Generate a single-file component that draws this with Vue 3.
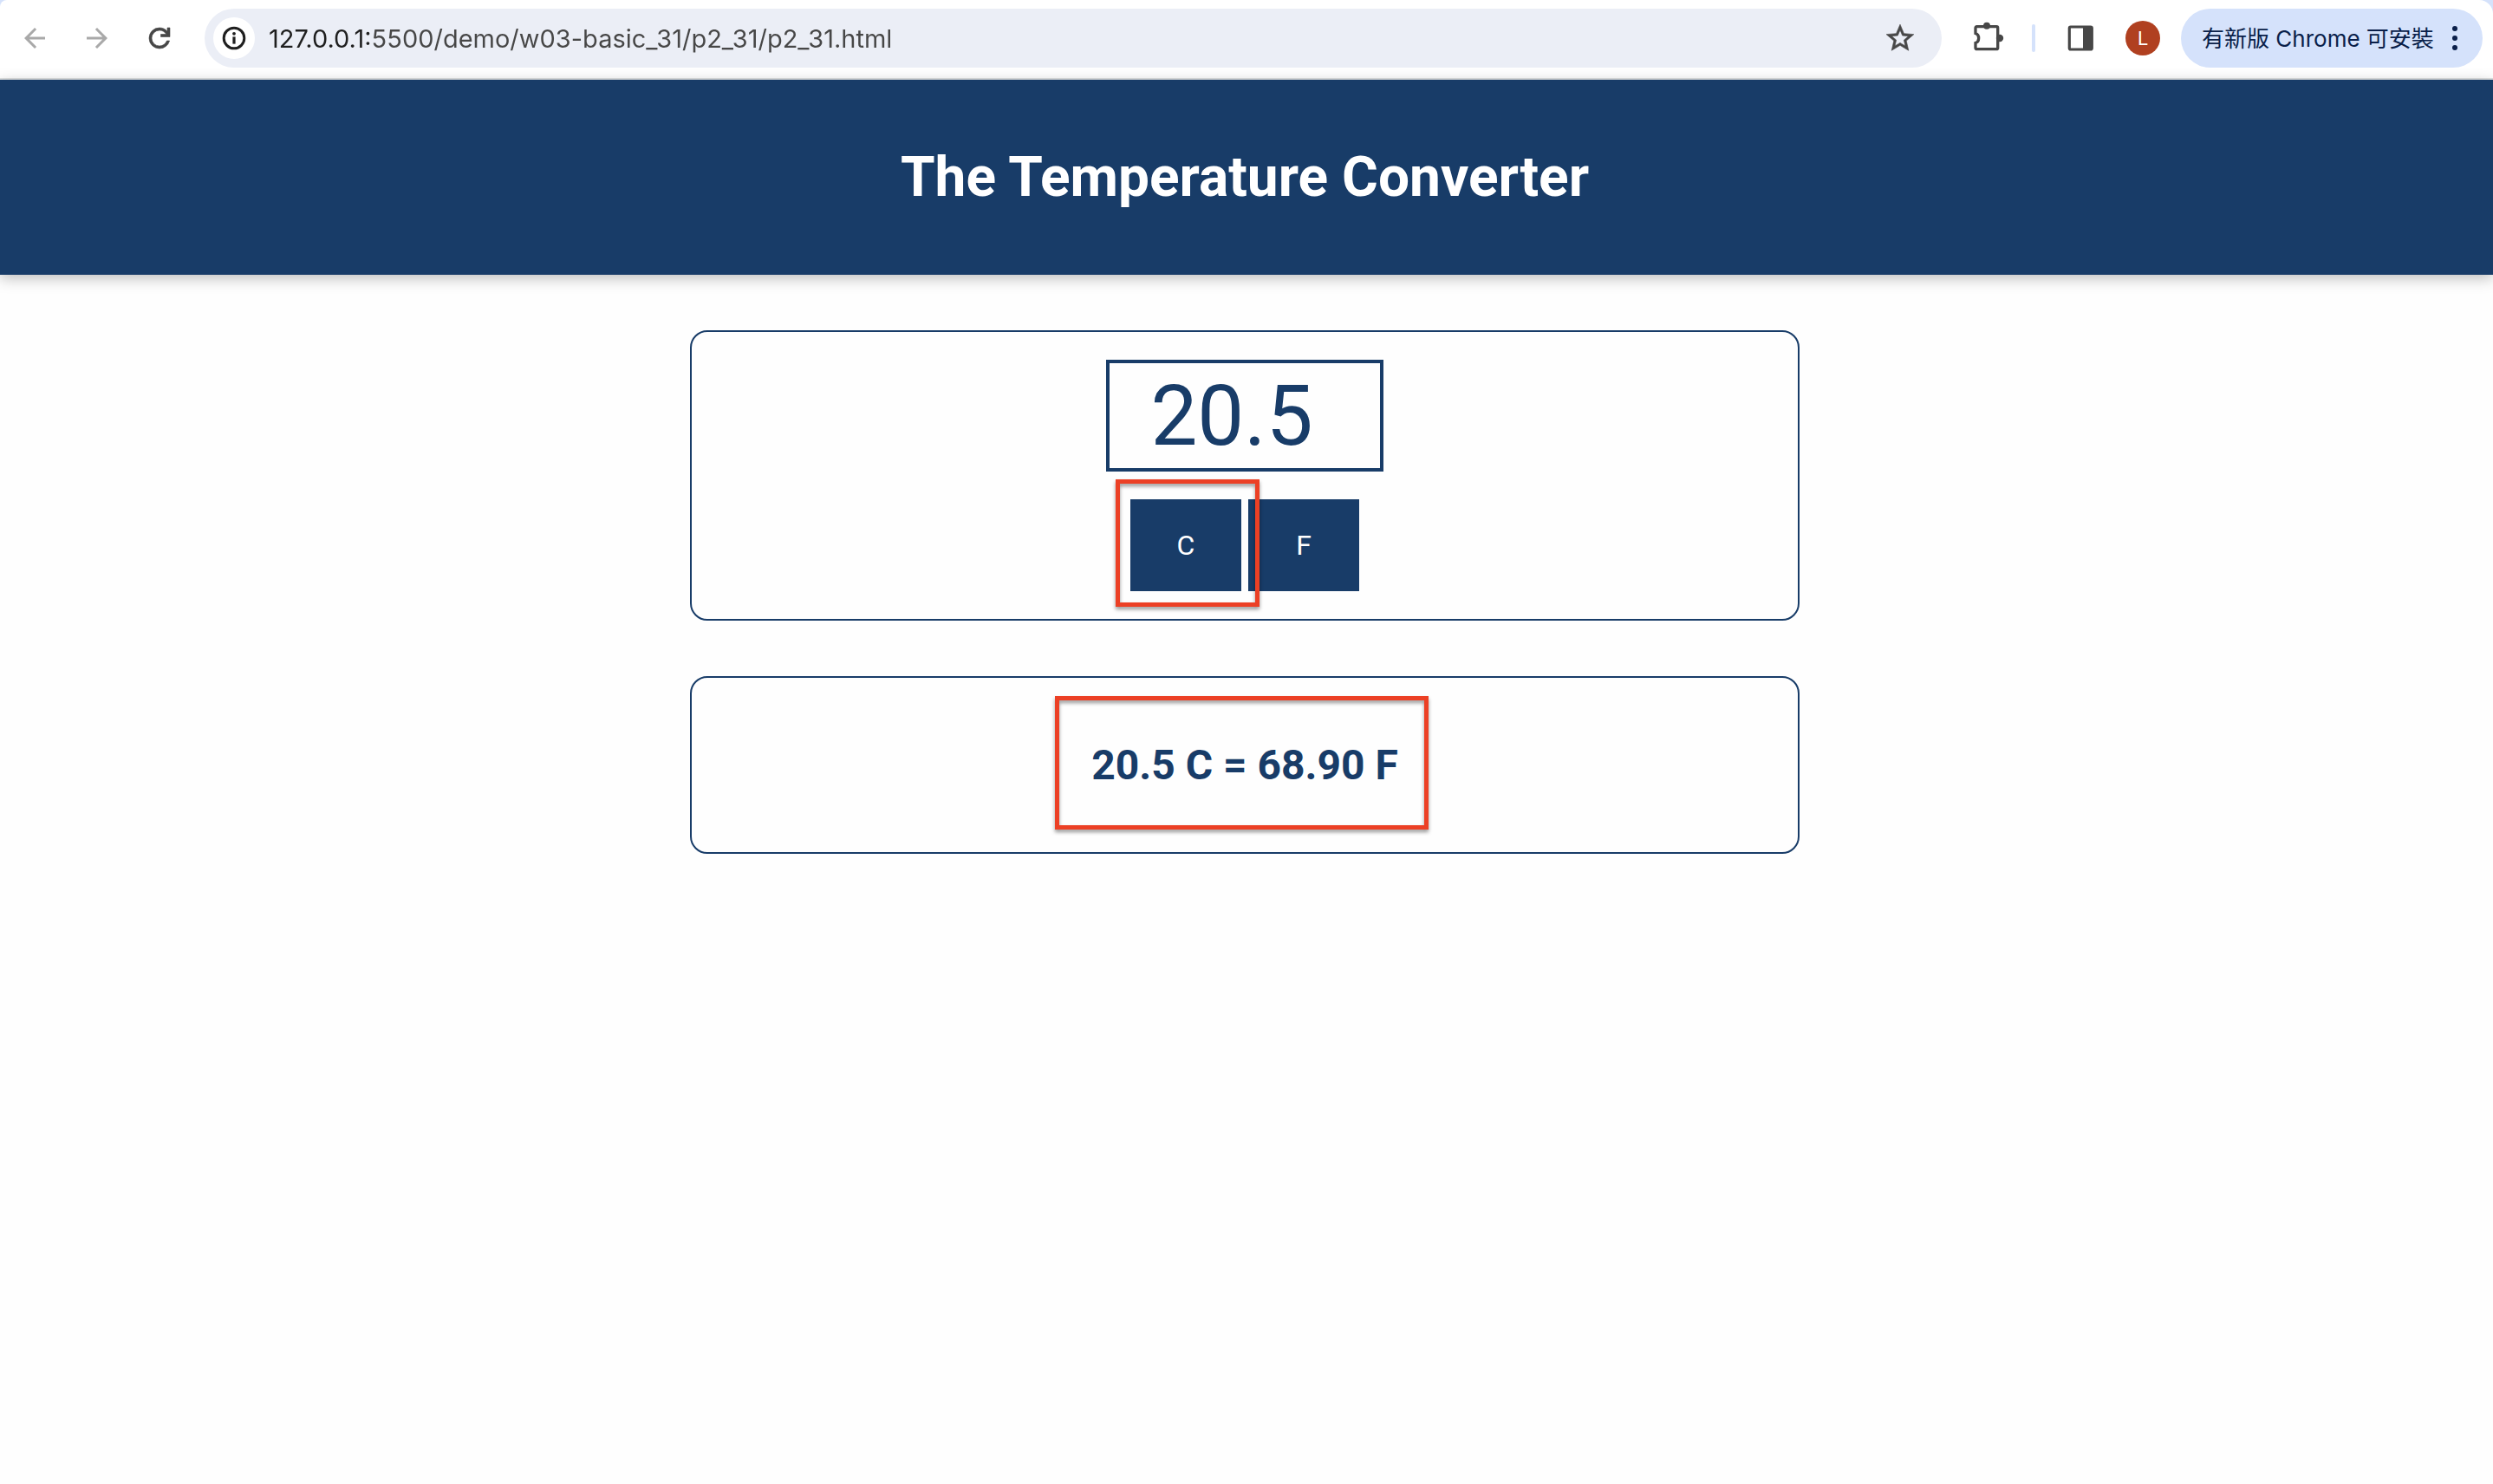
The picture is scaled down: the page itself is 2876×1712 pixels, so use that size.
<script setup>
import { computed, ref } from 'vue'

const address = ref('127.0.0.1:5500/demo/w03-basic_31/p2_31/p2_31.html')
const degrees = ref('20.5')
const unit = ref('C')

const result = computed(() => {
  const value = Number(degrees.value)
  return unit.value === 'C'
    ? `${degrees.value} C = ${((value * 9) / 5 + 32).toFixed(2)} F`
    : `${degrees.value} F = ${(((value - 32) * 5) / 9).toFixed(2)} C`
})
</script>

<template>
  <div class="window">
    <div class="frame">
      <div class="toolbar">
        <nav class="history">
          <button class="icon-button" type="button" aria-label="Back" disabled>
            <svg viewBox="0 0 24 24" width="36" height="36"><path d="M20 11H7.83l5.59-5.59L12 4l-8 8 8 8 1.41-1.41L7.83 13H20v-2z" /></svg>
          </button>
          <button class="icon-button" type="button" aria-label="Forward" disabled>
            <svg viewBox="0 0 24 24" width="36" height="36"><path d="M12 4l-1.41 1.41L16.17 11H4v2h12.17l-5.58 5.59L12 20l8-8z" /></svg>
          </button>
          <button class="icon-button" type="button" aria-label="Reload">
            <svg class="bold" viewBox="0 0 24 24" width="36" height="36"><path d="M12 20q-3.35 0-5.675-2.325T4 12q0-3.35 2.325-5.675T12 4q1.725 0 3.3.712T18 6.75V4h2v7h-7V9h4.2q-.8-1.4-2.188-2.2T12 6Q9.5 6 7.75 7.75T6 12q0 2.5 1.75 4.25T12 18q1.925 0 3.475-1.1T17.65 14h2.1q-.7 2.65-2.85 4.325T12 20Z" /></svg>
          </button>
        </nav>

        <div class="address">
          <button class="site-info" type="button" aria-label="Site information">
            <svg viewBox="0 0 28 28" width="28" height="28">
              <circle cx="14" cy="14" r="11.8" fill="none" stroke="currentColor" stroke-width="3" />
              <rect x="12.4" y="12.4" width="3.2" height="8.2" />
              <circle cx="14" cy="8.8" r="1.9" />
            </svg>
          </button>
          <input v-model="address" class="url" type="text" aria-label="Address" spellcheck="false" />
          <button class="icon-button" type="button" aria-label="Bookmark">
            <svg class="bold" viewBox="0 0 24 24" width="38" height="38"><path d="M22 9.24l-7.19-.62L12 2 9.19 8.63 2 9.24l5.46 4.73L5.82 21 12 17.27 18.18 21l-1.63-7.03L22 9.24zM12 15.4l-3.76 2.27 1-4.28-3.32-2.88 4.38-.38L12 6.1l1.71 4.04 4.38.38-3.32 2.88 1 4.28L12 15.4z" /></svg>
          </button>
        </div>

        <div class="actions">
          <button class="icon-button" type="button" aria-label="Extensions">
            <svg viewBox="0 0 40 40" width="40" height="40">
              <path d="M7 14.5V8.2Q7 6.7 8.5 6.7H31.2Q32.7 6.7 32.7 8.2V31.2Q32.7 32.7 31.2 32.7H8.5Q7 32.7 7 31.2V25.5C11.9 24 11.9 16 7 14.5Z" fill="none" stroke="currentColor" stroke-width="3.3" />
              <circle cx="20" cy="5.8" r="4" />
              <circle cx="35" cy="20" r="4.2" />
            </svg>
          </button>
          <span class="divider"></span>
          <button class="icon-button" type="button" aria-label="Side panel">
            <svg viewBox="0 0 40 40" width="40" height="40">
              <rect x="7.3" y="7" width="26" height="26" rx="1.5" fill="none" stroke="currentColor" stroke-width="3.2" />
              <rect x="23" y="7" width="11" height="26" />
            </svg>
          </button>
          <button class="avatar" type="button">L</button>
        </div>
        <button class="update" type="button">
          <span>有新版 Chrome 可安裝</span>
          <svg viewBox="0 0 6 28" width="6" height="28">
            <circle cx="3" cy="3" r="3" /><circle cx="3" cy="14" r="3" /><circle cx="3" cy="25" r="3" />
          </svg>
        </button>
      </div>
    </div>

    <header class="banner">
      <h1>The Temperature Converter</h1>
    </header>

    <main class="content">
      <section class="card">
        <input v-model="degrees" class="degrees" type="text" inputmode="decimal" aria-label="Degrees" />
        <div class="units">
          <div class="marked">
            <button class="unit" type="button" @click="unit = 'C'">C</button>
            <span class="mark mark-unit"></span>
          </div>
          <button class="unit" type="button" @click="unit = 'F'">F</button>
        </div>
      </section>

      <section class="card">
        <div class="marked">
          <h2>{{ result }}</h2>
          <span class="mark mark-result"></span>
        </div>
      </section>
    </main>
  </div>
</template>

<style>
body {
  margin: 0;
  background: #fefefe;
}
</style>

<style scoped>
.window {
  font-family: Roboto, "Noto Sans CJK TC", sans-serif;
  color: #183c68;
}

button,
input {
  box-sizing: border-box;
  margin: 0;
  padding: 0;
  border: 0;
  border-radius: 0;
  background: none;
  color: inherit;
  font-family: inherit;
}

svg {
  display: block;
  fill: currentColor;
}

.bold {
  stroke: currentColor;
  stroke-width: 0.4;
}

.frame {
  background: #d5e2fb;
}

.toolbar {
  display: flex;
  align-items: center;
  padding: 10px 12px 12px 22px;
  border-bottom: 2px solid #dfe1e1;
  border-radius: 8px 16px 0 0;
  background: #fff;
  color: #474747;
}

.history {
  display: flex;
  gap: 36px;
  margin-right: 34px;
}

.icon-button:disabled {
  color: #a9a9a9;
}

.address {
  display: flex;
  flex: 1;
  align-items: center;
  height: 68px;
  padding: 0 29px 0 10px;
  border-radius: 34px;
  background: #ebeef6;
}

.site-info {
  display: grid;
  place-items: center;
  width: 48px;
  height: 48px;
  border-radius: 50%;
  background: #fff;
  color: #1f1f1f;
}

.url {
  flex: 1;
  height: 48px;
  margin-left: 16px;
  background: linear-gradient(90deg, #1f1f1f 116px, #474747 116px) text;
  -webkit-text-fill-color: transparent;
  font-family: Inter, sans-serif;
  font-size: 29px;
}

.actions {
  display: flex;
  align-items: center;
  gap: 32px;
  margin: 0 24px 0 32px;
}

.divider {
  width: 4px;
  height: 32px;
  border-radius: 2px;
  background: #d5e2fb;
}

.avatar {
  width: 40px;
  height: 40px;
  border-radius: 50%;
  background: #b04020;
  color: #fff;
  font-size: 22px;
}

.update {
  display: flex;
  align-items: center;
  justify-content: space-between;
  width: 348px;
  height: 68px;
  padding: 0 29px 0 24px;
  border-radius: 34px;
  background: #d5e2fb;
  color: #0a1f4a;
  font-family: Inter, "Noto Sans CJK TC", sans-serif;
  font-size: 26px;
  white-space: nowrap;
}

.update span {
  padding-bottom: 4px;
}

.banner {
  padding: 32px 4px 32px 0;
  background: #183c68;
  box-shadow: 0 4px 16px rgba(0, 0, 0, 0.26);
  color: #fff;
  text-align: center;
}

h1 {
  margin: 43px 0;
  font-size: 64px;
  line-height: 75px;
}

.content {
  display: flex;
  flex-direction: column;
  align-items: center;
  gap: 64px;
  padding: 64px 4px 64px 0;
}

.card {
  display: flex;
  flex-direction: column;
  align-items: center;
  gap: 32px;
  box-sizing: border-box;
  width: 100%;
  max-width: 1280px;
  padding: 32px;
  border: 2px solid #183c68;
  border-radius: 20px;
}

.degrees {
  width: 320px;
  height: 129px;
  padding: 4px 30px 4px 0;
  border: 4px solid #183c68;
  font-size: 96px;
  text-align: center;
}

.units {
  display: flex;
  gap: 8px;
}

.unit {
  display: block;
  width: 128px;
  height: 106px;
  background: #183c68;
  color: #fff;
  font-size: 32px;
}

.marked {
  position: relative;
}

h2 {
  margin: 40px 0;
  font-size: 48px;
  line-height: 57px;
}

.mark {
  position: absolute;
  z-index: 1;
  border: 5px solid #ec4025;
  filter: drop-shadow(0 3px 2px rgba(0, 0, 0, 0.4));
  pointer-events: none;
}

.mark-unit {
  inset: -23px -21px -18px -17px;
}

.mark-result {
  inset: -11px -35px -6px -42px;
}
</style>
